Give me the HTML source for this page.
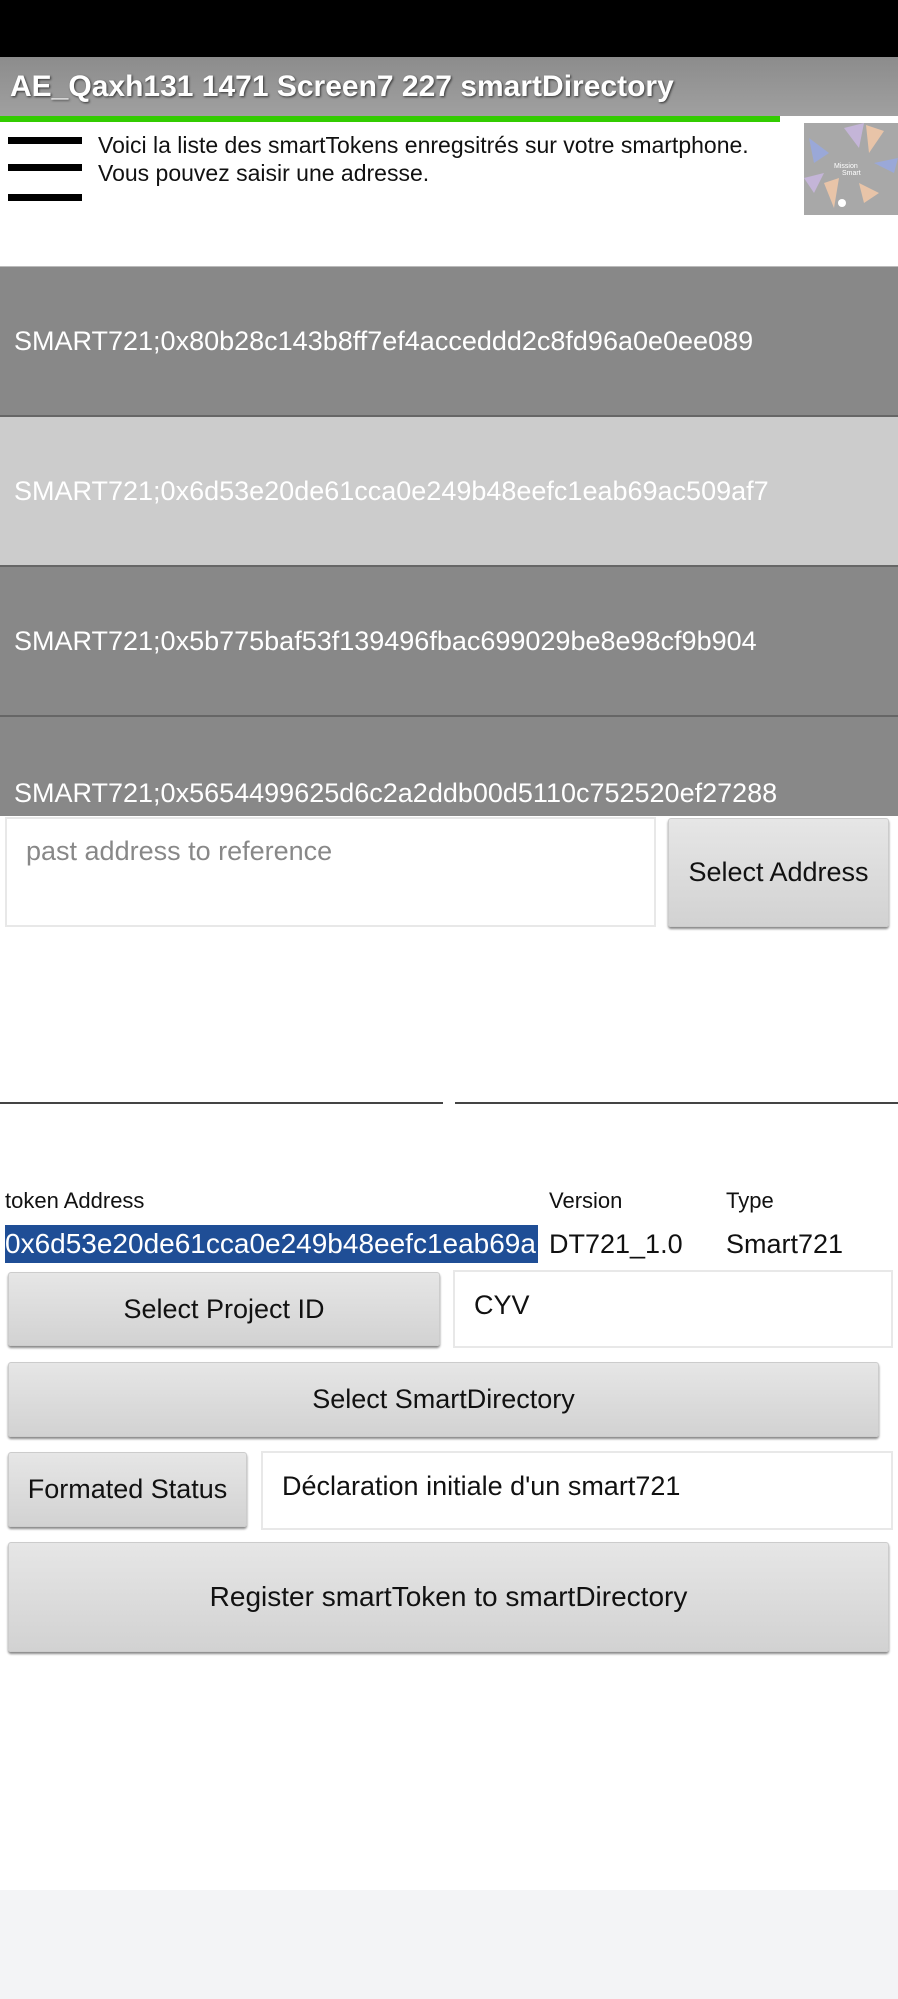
<!DOCTYPE html>
<html><head><meta charset="utf-8"><style>
*{margin:0;padding:0;box-sizing:border-box}
body{width:898px;height:1999px;position:relative;background:#fff;font-family:"Liberation Sans",sans-serif;overflow:hidden}
.a{position:absolute}
.btn{position:absolute;background:linear-gradient(#e6e6e6,#d2d2d2);border-radius:3px;box-shadow:0 2px 2px #888;border:1px solid #ccc;display:flex;align-items:center;justify-content:center;font-size:27px;color:#111;white-space:nowrap}
.box{position:absolute;border:2px solid #e8e8e8;background:#fff;font-size:27px;color:#111}
.row{position:absolute;left:0;width:898px;height:150px;color:#fff;font-size:27px;padding-left:14px;display:flex;align-items:center;border-bottom:2px solid #666;white-space:nowrap}
.bar{position:absolute;left:8px;width:74px;height:7px;background:#000}
</style></head><body>
<div class="a" style="left:0;top:0;width:898px;height:57px;background:#000"></div>
<div class="a" style="left:0;top:57px;width:898px;height:59px;background:linear-gradient(#8c8c8c,#a0a0a0);color:#fff;font-size:30px;font-weight:bold;padding-left:10px;line-height:59px;text-shadow:1px 1px 2px #333;white-space:nowrap">AE_Qaxh131 1471 Screen7 227 smartDirectory</div>
<div class="a" style="left:0;top:116px;width:780px;height:6px;background:#33cc00"></div>
<div class="bar" style="top:137px"></div>
<div class="bar" style="top:164px"></div>
<div class="bar" style="top:194px"></div>
<div class="a" style="left:98px;top:131px;font-size:23px;line-height:28px;color:#111;white-space:nowrap">Voici la liste des smartTokens enregsitrés sur votre smartphone.<br>Vous pouvez saisir une adresse.</div>
<div class="a" style="left:804px;top:123px;width:94px;height:92px;background:#a8a8a8;overflow:hidden">
<svg width="94" height="92"><polygon points="40,5 60,0 55,25" fill="#c4b5d8"/><polygon points="62,2 80,8 65,30" fill="#e8c4a8"/><polygon points="5,15 25,30 10,40" fill="#9aa8d8"/><polygon points="70,40 94,35 90,50" fill="#9aa8d8"/><polygon points="20,60 35,55 30,85" fill="#e8c4a8"/><polygon points="55,60 75,70 60,80" fill="#e8c4a8"/><polygon points="0,55 20,50 10,70" fill="#c4b5d8"/><text x="30" y="45" font-size="7" fill="#fff" font-family="Liberation Sans">Mission</text><text x="38" y="52" font-size="7" fill="#fff" font-family="Liberation Sans">Smart</text><circle cx="38" cy="80" r="4" fill="#fff"/></svg></div>
<div class="a" style="left:0;top:266px;width:898px;height:1px;background:#bbb"></div>
<div class="row" style="top:267px;background:#888">SMART721;0x80b28c143b8ff7ef4acceddd2c8fd96a0e0ee089</div>
<div class="row" style="top:417px;background:#cccccc">SMART721;0x6d53e20de61cca0e249b48eefc1eab69ac509af7</div>
<div class="row" style="top:567px;background:#888">SMART721;0x5b775baf53f139496fbac699029be8e98cf9b904</div>
<div class="a" style="left:0;top:717px;width:898px;height:99px;background:#888;overflow:hidden"><div style="position:absolute;left:14px;top:61px;color:#fff;font-size:27px;white-space:nowrap">SMART721;0x5654499625d6c2a2ddb00d5110c752520ef27288</div></div>
<div class="box" style="left:5px;top:817px;width:651px;height:110px;color:#888;padding:17px 0 0 19px">past address to reference</div>
<div class="btn" style="left:668px;top:818px;width:221px;height:109px">Select Address</div>
<div class="a" style="left:0;top:1102px;width:443px;height:2px;background:#444"></div>
<div class="a" style="left:455px;top:1102px;width:443px;height:2px;background:#444"></div>
<div class="a" style="left:5px;top:1188px;font-size:22px;color:#111">token Address</div>
<div class="a" style="left:549px;top:1188px;font-size:22px;color:#111">Version</div>
<div class="a" style="left:726px;top:1188px;font-size:22px;color:#111">Type</div>
<div class="a" style="left:5px;top:1225px;width:533px;height:38px;background:#1f4e96;color:#fff;font-size:28px;line-height:38px;white-space:nowrap;overflow:hidden">0x6d53e20de61cca0e249b48eefc1eab69a</div>
<div class="a" style="left:549px;top:1225px;font-size:27px;line-height:38px;color:#111">DT721_1.0</div>
<div class="a" style="left:726px;top:1225px;font-size:27px;line-height:38px;color:#111">Smart721</div>
<div class="btn" style="left:8px;top:1272px;width:432px;height:74px">Select Project ID</div>
<div class="box" style="left:453px;top:1270px;width:440px;height:78px;padding:18px 0 0 19px">CYV</div>
<div class="btn" style="left:8px;top:1362px;width:871px;height:75px">Select SmartDirectory</div>
<div class="btn" style="left:8px;top:1452px;width:239px;height:75px">Formated Status</div>
<div class="box" style="left:261px;top:1451px;width:632px;height:79px;padding:18px 0 0 19px">Déclaration initiale d'un smart721</div>
<div class="btn" style="left:8px;top:1542px;width:881px;height:110px;font-size:28px">Register smartToken to smartDirectory</div>
<div class="a" style="left:0;top:1890px;width:898px;height:109px;background:#f3f4f6"></div>
</body></html>
